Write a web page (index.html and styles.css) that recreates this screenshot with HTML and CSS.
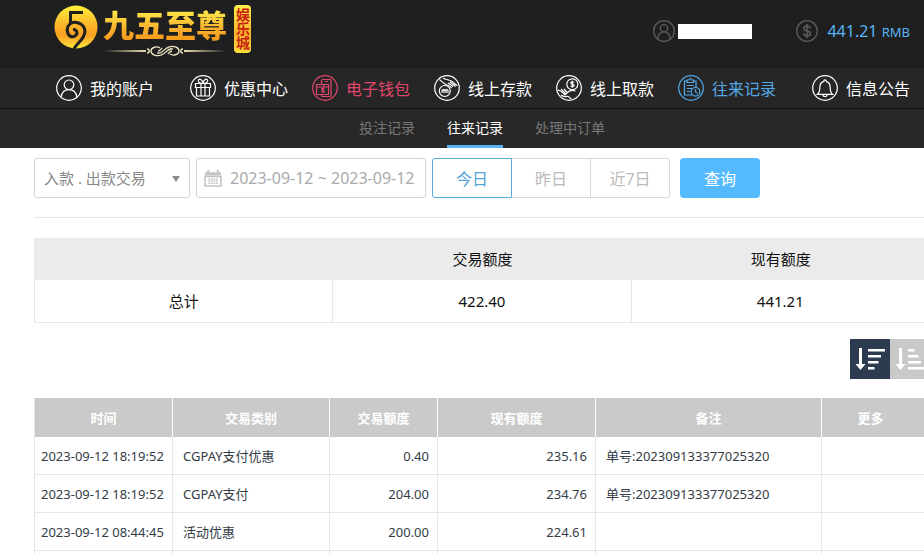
FILE: index.html
```html
<!DOCTYPE html>
<html lang="zh-Hans">
<head>
  <meta charset="UTF-8" />
  <meta name="viewport" content="width=device-width, initial-scale=1" />
  <title>往来记录 - 九五至尊娱乐城</title>
  <link rel="stylesheet" href="styles.css">
</head>
<body>
<div class="page">

  <header class="header">
    <a class="brand" href="#">
      <svg class="brand-mark" viewBox="0 0 44 44" aria-hidden="true">
        <defs>
          <linearGradient id="gold" x1="0" y1="0" x2="0" y2="1">
            <stop offset="0" stop-color="#fff23a" />
            <stop offset="0.45" stop-color="#fbb52a" />
            <stop offset="0.7" stop-color="#f9a024" />
            <stop offset="1" stop-color="#ffe93a" />
          </linearGradient>
        </defs>
        <circle cx="22" cy="22" r="21.5" fill="url(#gold)" />
        <g fill="none" stroke="#1f1f1f" stroke-width="3">
          <path d="M29 7.5H16.5V19" />
          <path d="M13.500 27c-1.500-7 4-10.500 9-9.500 8 1.500 10 8 7 14-2 4-6 7-9.500 12" />
          <path d="M13.500 26c0 5 4.500 7 7.500 5 3.500-2.500 2-6.500-2-6.500" />
        </g>
      </svg>
      <span class="brand-text">
        <span class="brand-name">九五至尊</span>
        <svg class="brand-line" viewBox="0 0 124 12" aria-hidden="true">
          <path d="M0 6l43-1v2zM124 6l-43-1v2z" fill="#e9dcae" />
          <g fill="none" stroke="#efe6c4" stroke-width="1.3">
            <path d="M44 4c3 0 3 4 0 4M80 4c-3 0-3 4 0 4" />
            <path d="M58 10c-4 1.500-10 0-10-4s6-5 9-3M66 2c4-1.500 10 0 10 4s-6 5-9 3" />
            <path d="M54 8c5 2 7-5 12-6M58 10c5-1 7-8 12-6M55 6c2 0 3-2 4-3M65 9c1-1 2-3 4-3" />
          </g>
        </svg>
      </span>
      <span class="brand-tag">娱乐城</span>
    </a>
    <div class="account">
      <div class="account-item">
        <svg class="account-icon" viewBox="0 0 22 22" aria-hidden="true">
          <circle cx="11" cy="11" r="10.3" />
          <circle cx="11" cy="8.3" r="3.6" />
          <path d="M4.8 18.6c.4-4 2.8-6.7 6.2-6.7s5.8 2.7 6.2 6.7" />
        </svg>
        <span class="account-name"></span>
      </div>
      <div class="account-item">
        <svg class="account-icon" viewBox="0 0 22 22" aria-hidden="true">
          <circle cx="11" cy="11" r="10.3" />
          <path class="thick" d="M14.2 8.2c-.4-1.500-1.600-2.200-3.200-2.200-1.900 0-3.200.9-3.200 2.400 0 3.300 6.600 1.700 6.600 5 0 1.600-1.400 2.500-3.400 2.500-1.800 0-3.100-.8-3.400-2.500M11 4v14" />
        </svg>
        <span class="balance">441.21 <small>RMB</small></span>
      </div>
    </div>
  </header>

  <nav class="nav">
    <div class="nav-group">
      <a class="nav-link" href="#">
        <svg class="nav-icon" viewBox="0 0 26 26" aria-hidden="true">
          <circle cx="13" cy="13" r="12.3" />
          <circle cx="13" cy="9.8" r="4.8" />
          <path d="M5 22.300c.7-4.800 3.800-7.700 8-7.700s7.300 2.900 8 7.700" />
        </svg>
        我的账户
      </a>
    </div>
    <div class="nav-group">
      <a class="nav-link" href="#">
        <svg class="nav-icon" viewBox="0 0 26 26" aria-hidden="true">
          <circle cx="13" cy="13" r="12.3" />
          <path d="M5.500 8.500h15v4h-15zM6.500 12.500h13v8.500h-13zM11 8.500V21M15 8.500V21M13 8.500C10 8.500 7.500 7 8.500 5s4-.5 4.500 3.500c.5-4 3.500-5.500 4.500-3.500s-1.500 3.500-4.500 3.500" />
        </svg>
        优惠中心
      </a>
      <a class="nav-link nav-link-wallet" href="#">
        <svg class="nav-icon" viewBox="0 0 26 26" aria-hidden="true">
          <circle cx="13" cy="13" r="12.3" />
          <path d="M9.500 9.500v-4q0-1 1-1H18q1 0 1 1v15q0 1-1 1h-7.500q-1 0-1-1v-1M13 6.500h3M4.500 9.500h12v10h-12zM4.500 12h12M12 11.500v-2" />
          <path d="M12.300 14c-.7-1-2.800-.7-2.700.3 0 1.200 2.800.7 2.800 2 0 1-2.300 1.200-3 .2M11 12.800v5" />
        </svg>
        电子钱包
      </a>
      <a class="nav-link" href="#">
        <svg class="nav-icon" viewBox="0 0 26 26" aria-hidden="true">
          <circle cx="13" cy="13" r="12.3" />
          <circle cx="10.800" cy="16" r="5.500" />
          <path d="M8 18v-2.500l1-1 1 1V18m0-2.500l1-1 1 1V18m0-2.500l1-1 1 1V18M5.500 4.500c2 1.500 4 4.500 7.500 5.500 2 .7 3.500 1 4.500 3M9 3c3 2 6 1.500 9 3.500 2 1.500 3 3 5.500 4M14 8l5 3.500M16 7l5.500 4.500" />
        </svg>
        线上存款
      </a>
      <a class="nav-link" href="#">
        <svg class="nav-icon" viewBox="0 0 26 26" aria-hidden="true">
          <circle cx="13" cy="13" r="12.3" />
          <circle cx="16.300" cy="9.300" r="5.500" />
          <path d="M18 7.500c-.8-1.200-3.300-.8-3.200.5.100 1.600 3.300.8 3.300 2.500 0 1.400-2.700 1.500-3.500.2M16.300 5.800v7M2 15l3.500 1.500L9 20l2.500-2.500c2-2 5-2.500 8-1.500M5 14l4.500 4.500M8 14l3 3.500M5 20c3 3 5 1 7 1.500s2 2.500 3.500 2.500" />
        </svg>
        线上取款
      </a>
      <a class="nav-link nav-link-active" href="#" aria-current="page">
        <svg class="nav-icon" viewBox="0 0 26 26" aria-hidden="true">
          <circle cx="13" cy="13" r="12.3" />
          <path d="M9 6H6.500v14H14M15.500 6H18v6M9 7.500V5h2q1.300-3 2.600 0h2v2.500zM9 10.500h6.500M9 13.500h5M9 16.500h3" />
          <circle cx="17.500" cy="16.800" r="4.300" />
          <path d="M17.500 14.300v2.700l2 1.200" />
        </svg>
        往来记录
      </a>
    </div>
    <div class="nav-group">
      <a class="nav-link" href="#">
        <svg class="nav-icon" viewBox="0 0 26 26" aria-hidden="true">
          <circle cx="13" cy="13" r="12.3" />
          <path d="M5.500 19.300c1.800-1.500 2.300-3.300 2.300-6.800 0-3.300 1.500-5.500 4-6.200 0-2 2.400-2 2.400 0 2.500.7 4 2.900 4 6.200 0 3.500.5 5.300 2.300 6.800zM11 19.500c0 2.800 4 2.800 4 0" />
        </svg>
        信息公告
      </a>
    </div>
  </nav>

  <nav class="subnav">
    <a class="subnav-link" href="#">投注记录</a>
    <a class="subnav-link subnav-link-active" href="#" aria-current="page">往来记录</a>
    <a class="subnav-link" href="#">处理中订单</a>
  </nav>

  <main class="content">
    <form class="filters">
      <div class="select-box">
        <select class="select" aria-label="交易类型">
          <option>入款 . 出款交易</option>
        </select>
      </div>
      <label class="date-box">
        <svg class="date-icon" viewBox="0 0 17 17" aria-hidden="true">
          <path d="M1 3h2V1h2v2h7V1h2v2h2v3H1z" fill="#c4c4c4" />
          <path d="M1 7h15v9H1z" fill="none" stroke="#c4c4c4" stroke-width="1.5" />
          <path d="M4 9.500h9M4 11.500h9M4 13.500h9" stroke="#c4c4c4" stroke-width="1.2" stroke-dasharray="1.8 0.6" />
        </svg>
        <input class="date-input" type="text" value="2023-09-12 ~ 2023-09-12" aria-label="日期" readonly />
      </label>
      <div class="range">
        <button class="range-btn range-btn-active" type="button">今日</button>
        <button class="range-btn" type="button">昨日</button>
        <button class="range-btn" type="button">近7日</button>
      </div>
      <button class="btn-search" type="button">查询</button>
    </form>

    <table class="summary">
      <thead>
        <tr><th></th><th>交易额度</th><th>现有额度</th></tr>
      </thead>
      <tbody>
        <tr><td>总计</td><td>422.40</td><td>441.21</td></tr>
      </tbody>
    </table>

    <div class="sort">
      <button class="sort-btn sort-btn-active" type="button" aria-label="降序">
        <svg viewBox="0 0 40 40" aria-hidden="true">
          <path d="M9 9h3v16h3.500l-5 6-5-6H9zM18 10h17v2.500H18zM18 16h13v2.500H18zM18 22h10.500v2.500H18zM18 28h6.500v2.500H18z" />
        </svg>
      </button>
      <button class="sort-btn" type="button" aria-label="升序">
        <svg viewBox="0 0 40 40" aria-hidden="true">
          <path d="M9 9h3v16h3.500l-5 6-5-6H9zM18 10h6.500v2.500H18zM18 16h10.500v2.500H18zM18 22h13v2.500H18zM18 28h17v2.500H18z" />
        </svg>
      </button>
    </div>

    <table class="records">
      <colgroup>
        <col class="col-time"><col class="col-type"><col class="col-amount">
        <col class="col-balance"><col class="col-note"><col>
      </colgroup>
      <thead>
        <tr><th>时间</th><th>交易类别</th><th>交易额度</th><th>现有额度</th><th>备注</th><th class="more">更多</th></tr>
      </thead>
      <tbody>
        <tr><td class="time">2023-09-12 18:19:52</td><td>CGPAY支付优惠</td><td class="num">0.40</td><td class="num">235.16</td><td>单号:202309133377025320</td><td></td></tr>
        <tr><td class="time">2023-09-12 18:19:52</td><td>CGPAY支付</td><td class="num">204.00</td><td class="num">234.76</td><td>单号:202309133377025320</td><td></td></tr>
        <tr><td class="time">2023-09-12 08:44:45</td><td>活动优惠</td><td class="num">200.00</td><td class="num">224.61</td><td></td><td></td></tr>
        <tr><td></td><td></td><td></td><td></td><td></td><td></td></tr>
      </tbody>
    </table>
  </main>

</div>
</body>
</html>
```
FILE: styles.css
```css
* {
  box-sizing: border-box;
}
body {
  margin: 0;
  overflow-x: hidden;
  background: #fff;
  color: #222;
  font-family: "Noto Sans", "Noto Sans CJK SC", sans-serif;
  font-size: 13px;
}
a {
  text-decoration: none;
}
button, input, select {
  font-family: inherit;
}
.page {
  min-width: 964px;
}

/* 顶部 */
.header {
  display: flex;
  justify-content: space-between;
  height: 68px;
  padding: 0 54px;
  background: #1f1f1f;
}
.brand {
  display: flex;
  align-items: flex-start;
  gap: 5px;
  padding-top: 5px;
}
.brand-mark {
  width: 44px;
  height: 44px;
}
.brand-text {
  display: flex;
  flex-direction: column;
  width: 124px;
}
.brand-name {
  height: 40px;
  font-size: 31px;
  line-height: 40px;
  font-weight: 900;
  color: transparent;
  background: linear-gradient(#ffe84a 15%, #f9b02c 60%, #f59b1e 85%);
  -webkit-background-clip: text;
  background-clip: text;
}
.brand-line {
  height: 12px;
}
.brand-tag {
  height: 48px;
  width: 17px;
  margin-left: 2px;
  border-radius: 4px;
  background: linear-gradient(#fff04a, #f9b02c 60%, #ffe03a);
  color: #c8200c;
  font-size: 14px;
  line-height: 17px;
  font-weight: 700;
  text-align: center;
  writing-mode: vertical-rl;
}
.account {
  display: flex;
  align-items: center;
  gap: 44px;
  height: 62px;
}
.account-item {
  display: flex;
  align-items: center;
  gap: 3px;
}
.account-icon {
  width: 22px;
  height: 22px;
  fill: none;
  stroke: #5c5c5c;
  stroke-width: 1.3;
}
.account-icon .thick {
  stroke-width: 1.6;
}
.account-name {
  width: 74px;
  height: 15px;
  background: #fff;
}
.balance {
  padding-left: 6px;
  color: #58b4f5;
  font-size: 16px;
}
.balance small {
  font-size: 13px;
}

/* 主导航 */
.nav {
  display: flex;
  justify-content: center;
  gap: 36px;
  height: 41px;
  padding-left: 2px;
  border-bottom: 1px solid #151515;
  background: #262626;
}
.nav-group {
  display: flex;
  gap: 24px;
}
.nav-link {
  display: flex;
  align-items: center;
  gap: 8px;
  color: #fff;
  font-size: 16px;
  white-space: nowrap;
}
.nav-link-wallet {
  color: #e0466b;
}
.nav-link-active {
  color: #55a9e8;
}
.nav-icon {
  width: 26px;
  height: 26px;
  fill: none;
  stroke: currentColor;
  stroke-width: 1.2;
}
.subnav {
  display: flex;
  justify-content: center;
  gap: 32px;
  height: 39px;
  background: #282828;
}
.subnav-link {
  border-bottom: 3px solid transparent;
  color: #777;
  font-size: 14px;
  line-height: 38px;
}
.subnav-link-active {
  border-bottom-color: #58b4f5;
  color: #fff;
}

/* 查询条件 */
.content {
  padding: 10px 34px 0;
}
.filters {
  display: flex;
  gap: 6px;
  padding-bottom: 19px;
  border-bottom: 1px solid #e6e6e6;
}
.select-box {
  position: relative;
  width: 156px;
}
.select-box::after {
  content: "";
  position: absolute;
  top: 18px;
  right: 10px;
  border: 4px solid transparent;
  border-top: 6px solid #8c8c8c;
  border-bottom: 0;
  pointer-events: none;
}
.select {
  width: 100%;
  height: 40px;
  padding: 0 9px;
  border: 1px solid #d4d4d4;
  border-radius: 3px;
  appearance: none;
  background: #fff;
  color: #888;
  font-size: 15px;
}
.date-box {
  display: flex;
  align-items: center;
  gap: 8px;
  width: 230px;
  height: 40px;
  padding: 0 7px;
  border: 1px solid #d4d4d4;
  border-radius: 3px;
}
.date-icon {
  flex: none;
  width: 18px;
  height: 18px;
}
.date-input {
  flex: 1;
  min-width: 0;
  padding: 0;
  border: 0;
  outline: 0;
  color: #aaa;
  font-size: 16px;
}
.range {
  display: flex;
}
.range-btn {
  width: 80px;
  height: 40px;
  margin-left: -1px;
  padding: 0;
  border: 1px solid #d8d8d8;
  background: #fff;
  color: #bbb;
  font-size: 16px;
}
.range-btn:first-child {
  margin-left: 0;
  border-radius: 3px 0 0 3px;
}
.range-btn:last-child {
  border-radius: 0 3px 3px 0;
}
.range-btn-active {
  z-index: 1;
  border-color: #55acdd;
  color: #55a4d8;
}
.btn-search {
  width: 80px;
  height: 40px;
  margin-left: 4px;
  padding: 0;
  border: 0;
  border-radius: 4px;
  background: #55b9ff;
  color: #fff;
  font-size: 16px;
}

/* 总计 */
table {
  width: 100%;
  table-layout: fixed;
  border-collapse: separate;
  border-spacing: 0;
}
.summary {
  margin-top: 20px;
  border-left: 1px solid #e8e8e8;
  color: #111;
  font-size: 15px;
  line-height: 20px;
  text-align: center;
}
.summary th {
  height: 42px;
  padding: 0;
  background: #ebebeb;
  font-weight: 400;
}
.summary td {
  height: 43px;
  padding: 0;
  border-right: 1px solid #e8e8e8;
  border-bottom: 1px solid #e8e8e8;
}

/* 排序 */
.sort {
  display: flex;
  justify-content: flex-end;
  margin: 16px 0 19px;
}
.sort-btn {
  width: 40px;
  height: 40px;
  padding: 0;
  border: 0;
  background: #c9c9c9;
  fill: #fff;
}
.sort-btn-active {
  background: #2c3b50;
}
.sort-btn svg {
  display: block;
}

/* 记录 */
.records {
  border-left: 1px solid #e6e6e6;
  color: #333c46;
  line-height: 18px;
}
.col-time {
  width: 138px;
}
.col-type {
  width: 157px;
}
.col-amount {
  width: 108px;
}
.col-balance {
  width: 158px;
}
.col-note {
  width: 226px;
}
.records th {
  height: 39px;
  padding: 0;
  border-right: 1px solid #fff;
  background: #cacaca;
  color: #fff;
  font-weight: 700;
}
.records th.more {
  padding-right: 10px;
}
.records td {
  height: 38px;
  padding: 0 8px 0 10px;
  border-right: 1px solid #e6e6e6;
  border-bottom: 1px solid #e6e6e6;
  white-space: nowrap;
}
.records td.time {
  padding: 0 0 0 6px;
}
.records td.num {
  text-align: right;
}
```
